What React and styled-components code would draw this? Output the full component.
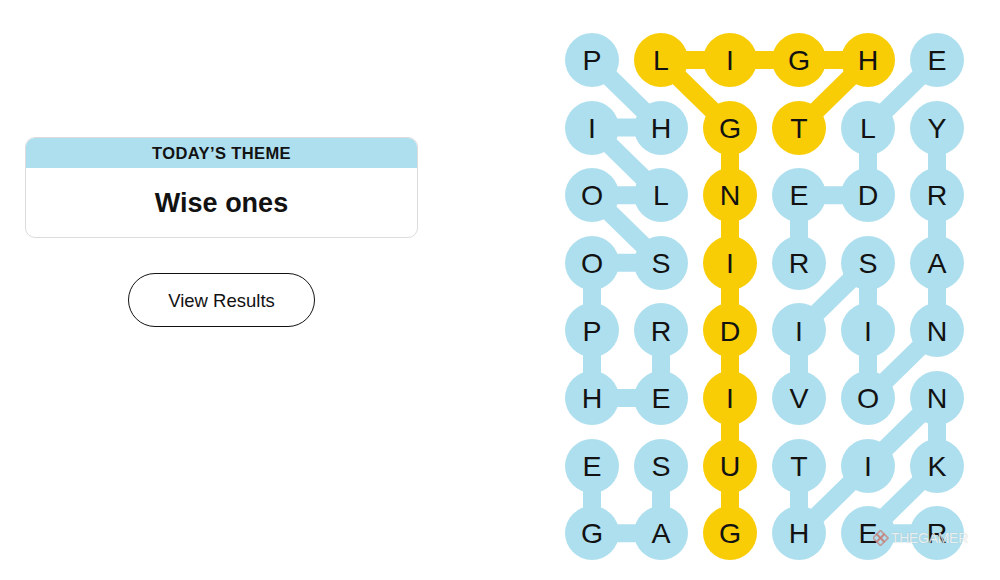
import React from "react";
import styled, { createGlobalStyle } from "styled-components";

const GlobalStyle = createGlobalStyle`
  html, body { margin: 0; padding: 0; background: #ffffff; }
  body { font-family: "Liberation Sans", Arial, sans-serif; color: #121212; }
`;

const BLUE = "#aedfee";
const YELLOW = "#f8cd05";
const SIZE = 54;
const COL = 69;
const ROW = 67.6;

const LETTERS = [
  "PLIGHE",
  "IHGTLY",
  "OLNEDR",
  "OSIRSA",
  "PRDIIN",
  "HEIVON",
  "ESUTIK",
  "GAGHER",
];

const SPANGRAM = [
  [7, 2], [6, 2], [5, 2], [4, 2], [3, 2], [2, 2], [1, 2],
  [0, 1], [0, 2], [0, 3], [0, 4], [1, 3],
];

const WORDS = [
  [[0, 0], [1, 1], [1, 0], [2, 1], [2, 0], [3, 1], [3, 0], [4, 0], [5, 0], [5, 1], [4, 1]],
  [[6, 1], [7, 1], [7, 0], [6, 0]],
  [[0, 5], [1, 4], [2, 4], [2, 3], [3, 3]],
  [[1, 5], [2, 5], [3, 5], [4, 5], [5, 4], [4, 4], [3, 4], [4, 3], [5, 3]],
  [[6, 3], [7, 3], [6, 4], [5, 5], [6, 5], [7, 4], [7, 5]],
];

const yellowSet = new Set(SPANGRAM.map(([r, c]) => `${r}-${c}`));

const Page = styled.div`
  display: flex;
  align-items: flex-start;
  width: 1000px;
  height: 580px;
  padding-left: 25px;
  box-sizing: border-box;
  overflow: hidden;
`;

const LeftPanel = styled.div`
  width: 393px;
  padding-top: 137px;
  display: flex;
  flex-direction: column;
  align-items: center;
  gap: 35px;
`;

const ThemeCard = styled.div`
  width: 100%;
  height: 101px;
  box-sizing: border-box;
  border: 1px solid #dcdcdc;
  border-radius: 10px;
  overflow: hidden;
  display: flex;
  flex-direction: column;
`;

const ThemeHeader = styled.div`
  height: 30px;
  background: ${BLUE};
  display: flex;
  align-items: center;
  justify-content: center;
  font-size: 16.5px;
  font-weight: 700;
  letter-spacing: 0.4px;
  color: #121212;
`;

const ThemeBody = styled.div`
  flex: 1;
  display: flex;
  align-items: center;
  justify-content: center;
  font-size: 27px;
  font-weight: 700;
  color: #121212;
  padding-top: 1px;
`;

const ResultsButton = styled.button`
  width: 187px;
  height: 54px;
  border: 1px solid #121212;
  border-radius: 27px;
  background: #ffffff;
  font-family: "Liberation Sans", Arial, sans-serif;
  font-size: 18.5px;
  color: #121212;
  padding-top: 3px;
  cursor: pointer;
`;

const Board = styled.div`
  position: relative;
  margin-left: 147px;
  margin-top: 33px;
  display: grid;
  grid-template-columns: repeat(6, ${SIZE}px);
  grid-auto-rows: ${SIZE}px;
  column-gap: ${COL - SIZE}px;
  row-gap: ${ROW - SIZE}px;
`;

const Lines = styled.svg`
  position: absolute;
  left: 0;
  top: 0;
  width: ${SIZE + COL * 5}px;
  height: ${SIZE + ROW * 7}px;
  overflow: visible;
  z-index: 0;
`;

const Cell = styled.div`
  position: relative;
  z-index: 1;
  width: ${SIZE}px;
  height: ${SIZE}px;
  border-radius: 50%;
  background: ${(p) => (p.$found ? YELLOW : BLUE)};
  display: flex;
  align-items: center;
  justify-content: center;
  font-size: 28.5px;
  color: #121212;
  line-height: 1;
  padding-top: 1px;
  box-sizing: border-box;
`;

const Watermark = styled.div`
  position: absolute;
  z-index: 2;
  left: 308px;
  top: 497px;
  display: flex;
  align-items: center;
  gap: 2px;
  font-size: 14px;
  letter-spacing: -0.3px;
  color: rgba(255, 255, 255, 0.75);
  text-shadow: 0 0 1px rgba(150, 150, 150, 0.5);
  pointer-events: none;
`;

const px = (c) => SIZE / 2 + c * COL;
const py = (r) => SIZE / 2 + r * ROW;

function Path({ cells, color }) {
  const segs = [];
  for (let i = 0; i < cells.length - 1; i++) {
    const [r1, c1] = cells[i];
    const [r2, c2] = cells[i + 1];
    segs.push(
      <line
        key={i}
        x1={px(c1)}
        y1={py(r1)}
        x2={px(c2)}
        y2={py(r2)}
        stroke={color}
        strokeWidth="18"
        strokeLinecap="round"
      />
    );
  }
  return <g>{segs}</g>;
}

export default function App() {
  return (
    <>
      <GlobalStyle />
      <Page>
        <LeftPanel>
          <ThemeCard>
            <ThemeHeader>TODAY’S THEME</ThemeHeader>
            <ThemeBody>Wise ones</ThemeBody>
          </ThemeCard>
          <ResultsButton>View Results</ResultsButton>
        </LeftPanel>
        <Board>
          <Lines>
            {WORDS.map((w, i) => (
              <Path key={i} cells={w} color={BLUE} />
            ))}
            <Path cells={SPANGRAM} color={YELLOW} />
          </Lines>
          {LETTERS.map((row, r) =>
            row.split("").map((ch, c) => (
              <Cell key={`${r}-${c}`} $found={yellowSet.has(`${r}-${c}`)}>
                {ch}
              </Cell>
            ))
          )}
          <Watermark>
            <svg width="16" height="16" viewBox="0 0 16 16">
              <g fill="none" stroke="rgba(200,120,110,0.7)" strokeWidth="1.6">
                <rect x="5" y="1.5" width="5" height="5" transform="rotate(45 7.5 4)" />
                <rect x="5" y="9.5" width="5" height="5" transform="rotate(45 7.5 12)" />
                <rect x="1" y="5.5" width="5" height="5" transform="rotate(45 3.5 8)" />
                <rect x="9" y="5.5" width="5" height="5" transform="rotate(45 11.5 8)" />
              </g>
            </svg>
            THEGAMER
          </Watermark>
        </Board>
      </Page>
    </>
  );
}
